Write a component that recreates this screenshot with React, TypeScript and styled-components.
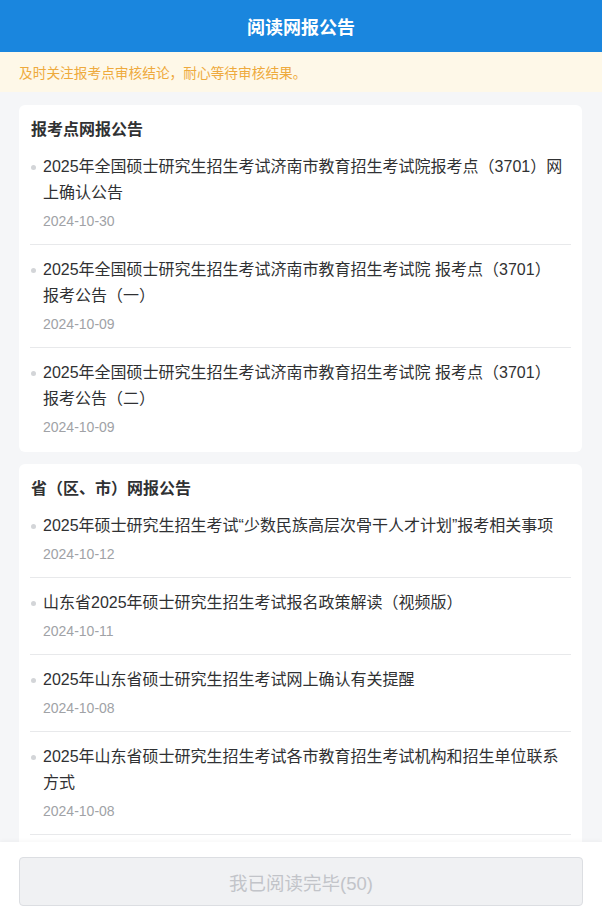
import * as React from 'react';
import styled, { createGlobalStyle } from 'styled-components';

const GlobalStyle = createGlobalStyle`
  html, body {
    margin: 0;
    padding: 0;
    background: #f5f6f8;
    font-family: "Liberation Sans", "Noto Sans CJK SC", sans-serif;
  }
  * {
    box-sizing: border-box;
  }
`;

const Page = styled.div`
  width: 602px;
  height: 918px;
  display: flex;
  flex-direction: column;
  background: #f5f6f8;
  overflow: hidden;
`;

const Header = styled.header`
  height: 52px;
  flex: none;
  display: flex;
  align-items: center;
  justify-content: center;
  background: #1a86de;
  color: #ffffff;
  font-size: 18px;
  font-weight: 700;
`;

const Notice = styled.div`
  height: 40px;
  flex: none;
  display: flex;
  align-items: center;
  padding: 0 19px;
  background: #fef8e8;
  color: #eeaa3d;
  font-size: 13.7px;
`;

const Body = styled.main`
  flex: 1;
  overflow: hidden;
  padding: 13px 20px 0 19px;
  display: flex;
  flex-direction: column;
  gap: 12px;
`;

const Card = styled.section`
  background: #ffffff;
  border-radius: 6px;
  padding: 13px 11px 0 11px;
  flex: none;
`;

const CardTitle = styled.h2`
  margin: 0 0 0 1px;
  font-size: 16px;
  line-height: 24px;
  font-weight: 700;
  color: #303133;
`;

const List = styled.ul`
  list-style: none;
  margin: 0;
  padding: 0;
`;

const Item = styled.li<{ $last?: boolean }>`
  position: relative;
  padding: 12px 0 ${(p) => (p.$last ? '15px' : '13px')} 13px;
  border-bottom: ${(p) => (p.$last ? 'none' : '1px solid #e8e9eb')};
  &::before {
    content: '';
    position: absolute;
    left: 1px;
    top: 23px;
    width: 5px;
    height: 5px;
    border-radius: 50%;
    background: #d3d5d8;
  }
`;

const ItemText = styled.div`
  font-size: 16px;
  line-height: 26px;
  color: #303133;
`;

const ItemDate = styled.div`
  margin-top: 5px;
  font-size: 14px;
  line-height: 20px;
  color: #a0a2a6;
`;

const Footer = styled.footer`
  height: 76px;
  flex: none;
  background: #ffffff;
  padding: 15px 19px 12px 19px;
  box-shadow: 0 -1px 4px rgba(0, 0, 0, 0.04);
  position: relative;
`;

const DoneButton = styled.button`
  width: 100%;
  height: 49px;
  border: 1px solid #dcdee2;
  border-radius: 4px;
  background: #f0f1f3;
  color: #c2c4c9;
  font-family: inherit;
  font-size: 18.5px;
  cursor: not-allowed;
`;

type Post = { title: React.ReactNode; date: string };

const sitePosts: Post[] = [
  {
    title: '2025年全国硕士研究生招生考试济南市教育招生考试院报考点（3701）网上确认公告',
    date: '2024-10-30',
  },
  {
    title: (
      <>
        2025年全国硕士研究生招生考试济南市教育招生考试院 报考点（3701）
        <br />
        报考公告（一）
      </>
    ),
    date: '2024-10-09',
  },
  {
    title: (
      <>
        2025年全国硕士研究生招生考试济南市教育招生考试院 报考点（3701）
        <br />
        报考公告（二）
      </>
    ),
    date: '2024-10-09',
  },
];

const provincePosts: Post[] = [
  {
    title: '2025年硕士研究生招生考试“少数民族高层次骨干人才计划”报考相关事项',
    date: '2024-10-12',
  },
  { title: '山东省2025年硕士研究生招生考试报名政策解读（视频版）', date: '2024-10-11' },
  { title: '2025年山东省硕士研究生招生考试网上确认有关提醒', date: '2024-10-08' },
  {
    title: '2025年山东省硕士研究生招生考试各市教育招生考试机构和招生单位联系方式',
    date: '2024-10-08',
  },
  { title: '2025年山东省硕士研究生招生考试网上报名公告', date: '2024-09-20' },
];

const NoticeCard: React.FC<{ title: string; posts: Post[]; closed?: boolean }> = ({
  title,
  posts,
  closed = true,
}) => (
  <Card>
    <CardTitle>{title}</CardTitle>
    <List>
      {posts.map((p, i) => (
        <Item key={i} $last={closed && i === posts.length - 1}>
          <ItemText>{p.title}</ItemText>
          <ItemDate>{p.date}</ItemDate>
        </Item>
      ))}
    </List>
  </Card>
);

const App: React.FC = () => {
  return (
    <>
      <GlobalStyle />
      <Page>
        <Header>阅读网报公告</Header>
        <Notice>及时关注报考点审核结论，耐心等待审核结果。</Notice>
        <Body>
          <NoticeCard title="报考点网报公告" posts={sitePosts} />
          <NoticeCard title="省（区、市）网报公告" posts={provincePosts} closed={false} />
        </Body>
        <Footer>
          <DoneButton disabled>我已阅读完毕(50)</DoneButton>
        </Footer>
      </Page>
    </>
  );
};

export default App;
